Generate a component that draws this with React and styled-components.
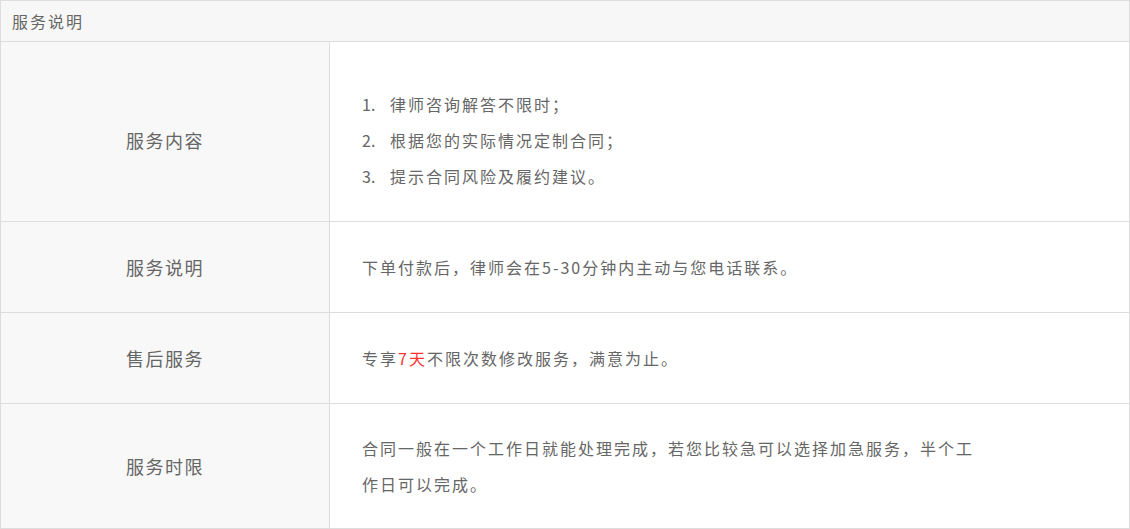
import React from "react";
import styled, { createGlobalStyle } from "styled-components";

const Global = createGlobalStyle`
  html, body { margin: 0; padding: 0; background: #fff; }
  body { font-family: "Noto Sans CJK SC", "Noto Sans", sans-serif; }
`;

const Table = styled.div`
  width: 1130px;
  box-sizing: border-box;
  border: 1px solid #dddddd;
  color: #666;
`;

const Header = styled.div`
  height: 40px;
  display: flex;
  align-items: center;
  padding-left: 11px;
  background: #f7f7f7;
  border-bottom: 1px solid #dddddd;
  font-size: 16px;
  letter-spacing: 2px;
  color: #666;
`;

const Row = styled.div`
  display: flex;
  border-bottom: ${(p) => (p.$last ? "none" : "1px solid #dddddd")};
`;

const Label = styled.div`
  width: 329px;
  flex: none;
  background: #f8f8f8;
  border-right: 1px solid #dddddd;
  display: flex;
  align-items: center;
  justify-content: center;
  font-size: 18px;
  letter-spacing: 1.5px;
  color: #666;
  padding-top: ${(p) => p.$shift || 0}px;
  box-sizing: border-box;
`;

const Content = styled.div`
  flex: 1;
  padding: ${(p) => p.$pt}px 32px ${(p) => p.$pb}px 32px;
  font-size: 16px;
  letter-spacing: 2px;
  line-height: 36px;
  color: #666;
`;

const Para = styled.p`
  margin: 0;
  max-width: 622px;
`;

const List = styled.ol`
  margin: 0;
  padding: 0;
  list-style: none;
`;

const Item = styled.li`
  display: flex;
`;

const Num = styled.span`
  display: inline-block;
  width: 28px;
  flex: none;
  letter-spacing: 0;
`;

const Red = styled.span`
  color: #f33;
`;

export default function App() {
  return (
    <>
      <Global />
      <Table>
        <Header>服务说明</Header>
        <Row>
          <Label $shift={17}>服务内容</Label>
          <Content $pt={44} $pb={27}>
            <List>
              <Item><Num>1.</Num>律师咨询解答不限时；</Item>
              <Item><Num>2.</Num>根据您的实际情况定制合同；</Item>
              <Item><Num>3.</Num>提示合同风险及履约建议。</Item>
            </List>
          </Content>
        </Row>
        <Row>
          <Label>服务说明</Label>
          <Content $pt={27} $pb={27}>
            <Para>下单付款后，律师会在5-30分钟内主动与您电话联系。</Para>
          </Content>
        </Row>
        <Row>
          <Label>售后服务</Label>
          <Content $pt={27} $pb={27}>
            <Para>专享<Red>7天</Red>不限次数修改服务，满意为止。</Para>
          </Content>
        </Row>
        <Row $last>
          <Label>服务时限</Label>
          <Content $pt={26} $pb={26}>
            <Para>合同一般在一个工作日就能处理完成，若您比较急可以选择加急服务，半个工作日可以完成。</Para>
          </Content>
        </Row>
      </Table>
    </>
  );
}
